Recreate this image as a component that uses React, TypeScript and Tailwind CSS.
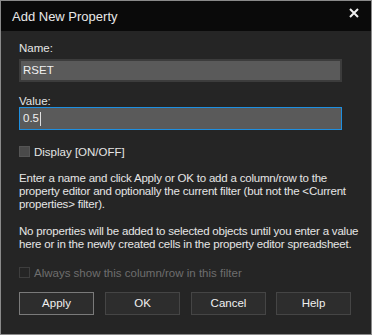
export default function App() {
  const font = { fontFamily: '"Liberation Sans", Arial, sans-serif' };
  return (
    <div
      className="w-[372px] h-[335px] border border-[#8a8a8a] bg-[#252525] flex flex-col text-[11.5px] text-[#e6e6e6]"
      style={font}
    >
      <div className="h-[30px] bg-[#0a0a0a] flex items-center justify-between pl-[11px] pr-[12px] shrink-0">
        <span className="text-[13px] text-[#e8e8e8] mt-[2px]">Add New Property</span>
        <svg width="10" height="10" viewBox="0 0 10 10" className="-mt-[6px]">
          <path d="M1 1 L9 9 M9 1 L1 9" stroke="#f0f0f0" strokeWidth="2" />
        </svg>
      </div>
      <div className="flex flex-col pl-[18px] pr-[6px]">
        <label className="mt-[10px] h-[14px] leading-[14px]">Name:</label>
        <div className="mt-[4px] w-[323px] h-[23px] border-2 border-[#3c3c3c] bg-[#5a5a5a] flex items-center px-[2px] text-[#f0f0f0]">
          RSET
        </div>
        <label className="mt-[12px] h-[14px] leading-[14px]">Value:</label>
        <div className="mt-[-1px] w-[323px] h-[23px] border border-[#1e8fe0] bg-[#5a5a5a] flex items-center px-[3px] text-[#f0f0f0]">
          0.5<span className="inline-block w-px h-[14px] bg-[#e0e0e0] ml-px" />
        </div>
        <div className="mt-[16px] flex items-center gap-[4px] h-[11px]">
          <span className="w-[11px] h-[11px] bg-[#4a4a4a] border border-[#555]" />
          <span className="leading-[14px]">Display [ON/OFF]</span>
        </div>
        <p className="mt-[15px] leading-[13px] w-[340px] tracking-[-0.2px]">
          Enter a name and click Apply or OK to add a column/row to the property editor and optionally the
          current filter (but not the &lt;Current properties&gt; filter).
        </p>
        <p className="mt-[14px] leading-[13px] w-[345px] tracking-[-0.2px]">
          No properties will be added to selected objects until you enter a value here or in the newly
          created cells in the property editor spreadsheet.
        </p>
        <div className="mt-[16px] flex items-center gap-[4px] h-[11px] text-[#6e6e6e]">
          <span className="w-[11px] h-[11px] border border-[#3e3e3e]" />
          <span className="leading-[14px]">Always show this column/row in this filter</span>
        </div>
        <div className="mt-[14px] flex gap-[10px]">
          <button className="w-[75px] h-[23px] border border-[#7a7a7a] bg-[#2d2d2d] text-[#f0f0f0]">Apply</button>
          <button className="w-[75px] h-[23px] border border-[#454545] bg-[#2d2d2d] text-[#f0f0f0] ml-[1px]">OK</button>
          <button className="w-[75px] h-[23px] border border-[#454545] bg-[#2d2d2d] text-[#f0f0f0] ml-[1px]">Cancel</button>
          <button className="w-[75px] h-[23px] border border-[#454545] bg-[#2d2d2d] text-[#f0f0f0]">Help</button>
        </div>
      </div>
    </div>
  );
}
